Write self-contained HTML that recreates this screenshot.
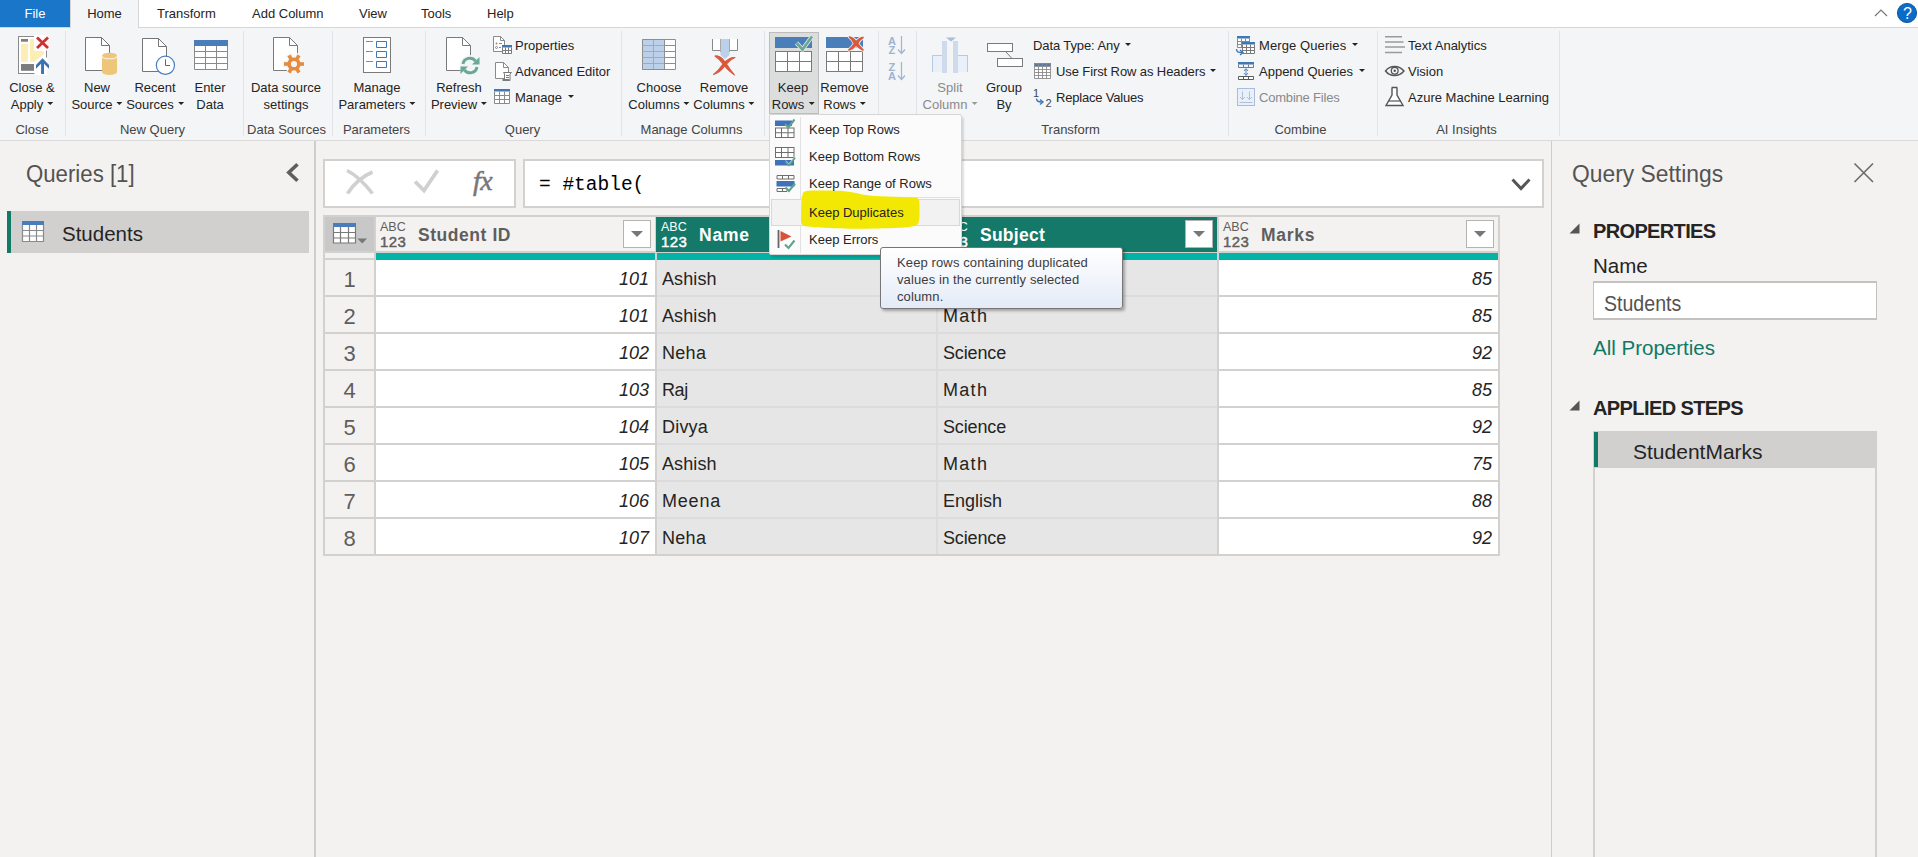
<!DOCTYPE html>
<html><head><meta charset="utf-8"><title>Power Query Editor</title>
<style>
*{box-sizing:border-box;margin:0;padding:0}
html,body{width:1918px;height:857px;overflow:hidden;background:#f3f2f1;font-family:"Liberation Sans",sans-serif;color:#252423}
.abs{position:absolute}
#tabs{position:absolute;left:0;top:0;width:1918px;height:28px;background:#fff;border-bottom:1px solid #d6d6d6}
#tabs .t{position:absolute;top:0;height:27px;line-height:27px;font-size:13px;color:#252423;white-space:nowrap}
#file{left:0;width:70px;background:#1976c8;color:#fff !important;text-align:center}
#home{left:70px;width:69px;background:#f3f5f7;text-align:center;border-left:1px solid #d6d6d6;border-right:1px solid #d6d6d6;height:28px !important}
#ribbon{position:absolute;left:0;top:28px;width:1918px;height:112px;background:#f3f5f7}
.rt{position:absolute;font-size:13px;line-height:17px;white-space:nowrap;color:#252423}
.rc{text-align:center;transform:translateX(-50%)}
.dis{color:#8a8a8a}
.sep{position:absolute;top:31px;width:1px;height:105px;background:#e1e3e6}
.gl{position:absolute;top:121px;font-size:13px;line-height:17px;color:#444;white-space:nowrap;transform:translateX(-50%)}
.car{display:inline-block;width:0;height:0;border-left:3.5px solid transparent;border-right:3.5px solid transparent;border-top:3.5px solid #252423;vertical-align:middle;margin-left:4px;position:relative;top:-2.5px}
.dis .car{border-top-color:#9a9a9a}

.lt{white-space:nowrap}
.ty{font-size:12.5px;line-height:13px;white-space:nowrap}
.ty .n{font-size:15px;font-weight:normal;-webkit-text-stroke:0.45px;line-height:15px;letter-spacing:0.45px}
.hd{font-size:17.5px;font-weight:bold;line-height:22px;letter-spacing:0.55px;white-space:nowrap}
.fb{width:28px;height:28px;background:#fff;border:1px solid #b5b3b1}
.fb i{position:absolute;left:7px;top:10px;width:0;height:0;border-left:6px solid transparent;border-right:6px solid transparent;border-top:6px solid #777}
.rn{width:49px;height:35px;background:#f3f2f1;color:#605e5c;font-size:22px;line-height:39px;text-align:center}
.c{width:279px;height:35px;background:#fff;font-size:18px;line-height:38px;color:#252423;white-space:nowrap}
.c.s{background:#e6e6e6}
.c.num{text-align:right;padding-right:6px;font-style:italic}
.c.txt{padding-left:5px}
</style></head><body>
<!--TABS-->
<div id="tabs">
<div class="t" id="file">File</div>
<div class="t" id="home">Home</div>
<div class="t" style="left:157px">Transform</div>
<div class="t" style="left:252px">Add Column</div>
<div class="t" style="left:359px">View</div>
<div class="t" style="left:421px">Tools</div>
<div class="t" style="left:487px">Help</div>
</div>
<!--RIBBON-->
<div id="ribbon"></div>
<div id="rc">
<!-- separators -->
<div class="sep" style="left:65px"></div><div class="sep" style="left:243px"></div><div class="sep" style="left:332px"></div><div class="sep" style="left:425px"></div><div class="sep" style="left:621px"></div><div class="sep" style="left:764px"></div><div class="sep" style="left:878px"></div><div class="sep" style="left:916px"></div><div class="sep" style="left:1228px"></div><div class="sep" style="left:1377px"></div><div class="sep" style="left:1559px"></div>
<!-- group labels -->
<div class="gl" style="left:32px">Close</div><div class="gl" style="left:152.5px">New Query</div><div class="gl" style="left:286.5px">Data Sources</div><div class="gl" style="left:376.5px">Parameters</div><div class="gl" style="left:522.5px">Query</div><div class="gl" style="left:691.5px">Manage Columns</div><div class="gl" style="left:1070.5px">Transform</div><div class="gl" style="left:1300.5px">Combine</div><div class="gl" style="left:1466.5px">AI Insights</div>
<!-- keep rows pressed button -->
<div class="abs" style="left:769px;top:32px;width:50px;height:82px;background:#dcdddd;border:1px solid #bdbdbd"></div>
<!-- big button labels -->
<div class="rt rc" style="left:32px;top:79px">Close &amp;<br>Apply<i class="car"></i></div>
<div class="rt rc" style="left:97px;top:79px">New<br>Source<i class="car"></i></div>
<div class="rt rc" style="left:155px;top:79px">Recent<br>Sources<i class="car"></i></div>
<div class="rt rc" style="left:210px;top:79px">Enter<br>Data</div>
<div class="rt rc" style="left:286px;top:79px">Data source<br>settings</div>
<div class="rt rc" style="left:377px;top:79px">Manage<br>Parameters<i class="car"></i></div>
<div class="rt rc" style="left:459px;top:79px">Refresh<br>Preview<i class="car"></i></div>
<div class="rt rc" style="left:659px;top:79px">Choose<br>Columns<i class="car"></i></div>
<div class="rt rc" style="left:724px;top:79px">Remove<br>Columns<i class="car"></i></div>
<div class="rt rc" style="left:793px;top:79px">Keep<br>Rows<i class="car"></i></div>
<div class="rt rc" style="left:844.5px;top:79px">Remove<br>Rows<i class="car"></i></div>
<div class="rt rc dis" style="left:950px;top:79px">Split<br>Column<i class="car"></i></div>
<div class="rt rc" style="left:1004px;top:79px">Group<br>By</div>
<!-- small buttons -->
<div class="rt" style="left:515px;top:37px">Properties</div>
<div class="rt" style="left:515px;top:63px">Advanced Editor</div>
<div class="rt" style="left:515px;top:89px">Manage<i class="car" style="margin-left:6px"></i></div>
<div class="rt" style="left:1033px;top:37px;letter-spacing:-0.1px">Data Type: Any<i class="car" style="margin-left:5px"></i></div>
<div class="rt" style="left:1056px;top:63px;letter-spacing:-0.1px">Use First Row as Headers<i class="car" style="margin-left:5px"></i></div>
<div class="rt" style="left:1056px;top:89px;letter-spacing:-0.2px">Replace Values</div>
<div class="rt" style="left:1259px;top:37px;letter-spacing:0.1px">Merge Queries<i class="car" style="margin-left:6px"></i></div>
<div class="rt" style="left:1259px;top:63px">Append Queries<i class="car" style="margin-left:6px"></i></div>
<div class="rt dis" style="left:1259px;top:89px;letter-spacing:-0.2px">Combine Files</div>
<div class="rt" style="left:1408px;top:37px">Text Analytics</div>
<div class="rt" style="left:1408px;top:63px">Vision</div>
<div class="rt" style="left:1408px;top:89px">Azure Machine Learning</div>
<svg class="abs" style="left:0;top:0" width="1918" height="145" viewBox="0 0 1918 145" fill="none" font-family="Liberation Sans, sans-serif">
<!-- Close & Apply -->
<g>
<rect x="18.500" y="36.500" width="28" height="37" fill="#fff" stroke="#8a8a8a"/>
<rect x="21" y="39" width="7" height="2.700" fill="#7d7d7d"/>
<rect x="21" y="44" width="7" height="17.800" fill="#fdeeb5"/>
<path d="M30 39H34V49L36 51H44V54L34.500 61.800H30Z" fill="#fdeeb5"/>
<rect x="21" y="64" width="13" height="6.800" fill="#7d7d7d"/>
<rect x="34" y="35" width="16" height="15.500" fill="#fff"/>
<path d="M34.500 63L42.500 56L47 57.700H50V75H34.500Z" fill="#fff"/>
<rect x="47.200" y="57.500" width="3" height="17" fill="#f3f5f7"/>
<rect x="47.200" y="35" width="3" height="16" fill="#f3f5f7"/>
<path d="M37 37.500L48 48M48 37.500L37 48" stroke="#cf2f2f" stroke-width="2.800"/>
<path d="M42.550 74V62" stroke="#3b73b0" stroke-width="2.900"/>
<path d="M36 65V68.800L42.550 62.200L49 68.800V65L42.550 58.300Z" fill="#3b73b0"/>
</g>
<!-- New Source -->
<g stroke="#757575">
<path d="M85.500 37.500H101.500L109.500 45.500V70.500H85.500Z" fill="#fff"/>
<path d="M101.500 37.500V45.500H109.500"/>
</g>
<path d="M102 55.500V72A7.500 3 0 0 0 117 72V55.500A7.500 2.800 0 0 0 102 55.500Z" fill="#edc67a"/>
<path d="M102 56A7.500 2.800 0 0 0 117 56" stroke="#fcf1d8" stroke-width="1.100"/>
<!-- Recent Sources -->
<g stroke="#757575">
<path d="M142.500 38.500H158.500L166.500 46.500V71.500H142.500Z" fill="#fff"/>
<path d="M158.500 38.500V46.500H166.500"/>
</g>
<circle cx="165.400" cy="65.300" r="9.100" fill="#fff" stroke="#4a7ebb" stroke-width="1.200"/>
<path d="M165.500 59.300V65.500H170" stroke="#666" stroke-width="1"/>
<!-- Enter Data -->
<rect x="194" y="40" width="34" height="30" fill="#fff"/>
<rect x="194" y="40" width="34" height="6" fill="#4a7ebb"/>
<path d="M194.500 46V69.500H227.500V46M205.500 46V69.500M216.500 46V69.500M194.500 51.500H227.500M194.500 57.500H227.500M194.500 63.500H227.500" stroke="#8a8a8a"/>
<!-- Data source settings -->
<g stroke="#7a7a7a">
<path d="M273.500 37.500H289.500L297.500 45.500V70.500H273.500Z" fill="#fff"/>
<path d="M289.500 37.500V45.500H297.500"/>
</g>
<g transform="translate(294 64)">
<g fill="#f3f5f7" stroke="#f3f5f7" stroke-width="2.400">
<rect x="-10" y="-1.800" width="20" height="3.600"/>
<rect x="-10" y="-1.800" width="20" height="3.600" transform="rotate(60)"/>
<rect x="-10" y="-1.800" width="20" height="3.600" transform="rotate(120)"/>
<circle r="6.600"/>
</g>
<g fill="#e78b3e">
<rect x="-10" y="-1.800" width="20" height="3.600"/>
<rect x="-10" y="-1.800" width="20" height="3.600" transform="rotate(60)"/>
<rect x="-10" y="-1.800" width="20" height="3.600" transform="rotate(120)"/>
<circle r="6.600"/>
</g>
<circle r="3.100" fill="#f3f5f7"/>
</g>
<!-- Manage Parameters -->
<rect x="363.500" y="37.500" width="27" height="35" fill="#fff" stroke="#7a7a7a"/>
<path d="M366 41.500H373M366 51.500H373M366 61.500H373" stroke="#8a8a8a"/>
<path d="M376.500 41.500H386.500V47.500H376.500ZM376.500 51.500H386.500V57.500H376.500ZM376.500 61.500H386.500V67.500H376.500Z" stroke="#3f78b5"/>
<!-- Refresh Preview -->
<g stroke="#7a7a7a">
<path d="M446.500 37.500H462.500L470.500 45.500V70.500H446.500Z" fill="#fff"/>
<path d="M462.500 37.500V45.500H470.500"/>
</g>
<g transform="translate(470 65.500)">
<circle r="10.500" fill="#f3f5f7"/>
<path d="M-7 -1.500A7 7 0 0 1 5.500 -4.500" stroke="#6aa894" stroke-width="3"/>
<path d="M9.500 -8.500V-1H2Z" fill="#6aa894"/>
<path d="M7 1.500A7 7 0 0 1 -5.500 4.500" stroke="#6aa894" stroke-width="3"/>
<path d="M-9.500 8.500V1H-2Z" fill="#6aa894"/>
</g>
<!-- Properties small -->
<g stroke="#8a8a8a">
<path d="M493.500 36.500H500.500L504.500 40.500V51.500H493.500Z" fill="#fff"/>
<path d="M500.500 36.500V40.500H504.500"/>
<path d="M499 43.500H502M499 47.500H501" />
<circle cx="496.500" cy="43.500" r="1" fill="#8a8a8a" stroke="none"/>
<circle cx="496.500" cy="47.500" r="1" fill="#fff"/>
</g>
<rect x="502" y="45" width="10" height="9" fill="#fff"/>
<rect x="502" y="45" width="10" height="2.500" fill="#3f78b5"/>
<path d="M502.500 47.500V53.500H511.500V47.500M505.500 47.500V53.500M508.500 47.500V53.500M502.500 50.500H511.500" stroke="#7a7a7a"/>
<!-- Advanced editor -->
<g stroke="#8a8a8a">
<path d="M495.500 62.500H503.500L508.500 67.500V78.500H495.500Z" fill="#fff"/>
<path d="M503.500 62.500V67.500H508.500"/>
</g>
<path d="M503.500 72.500H511.500L510 74V80.500H504.500V74Z" fill="#fff" stroke="#7a7a7a"/>
<path d="M506 75.500H509M506 77.500H509" stroke="#7a7a7a"/>
<rect x="502.500" y="79" width="7" height="2" fill="#7a7a7a"/>
<!-- Manage small -->
<rect x="494" y="89" width="16" height="15" fill="#fff"/>
<rect x="494" y="89" width="16" height="2.500" fill="#3f78b5"/>
<path d="M494.500 91.500V103.500H509.500V91.500M499.500 91.500V103.500M504.500 91.500V103.500M494.500 95.500H509.500M494.500 99.500H509.500" stroke="#8a8a8a"/>
<!-- Choose Columns -->
<rect x="642" y="39" width="34" height="31" fill="#fff"/>
<rect x="642" y="39" width="22.5" height="31" fill="#bdd0e9"/>
<path d="M642.500 39.500H675.500V69.500H642.500ZM653.500 39.500V69.500M664.500 39.500V69.500M642.500 45.500H675.500M642.500 51.500H675.500M642.500 57.500H675.500M642.500 63.500H675.500" stroke="#8e8e8e"/>
<path d="M653.500 40V69M642.500 45.500H664M642.500 51.500H664M642.500 57.500H664M642.500 63.500H664" stroke="#a9a9a9"/>
<!-- Remove Columns -->
<rect x="712" y="39" width="26" height="11" fill="#fff"/>
<path d="M712.500 39V50.500H720.500M729.500 50.500H737.500V39" stroke="#8a8a8a"/>
<path d="M720.500 39V55L725 59L729.500 55V39Z" fill="#bdd0e9"/>
<path d="M720.500 39V52M729.500 39V52" stroke="#a9a9a9"/>
<path d="M715 56C719 55 722 58 725 62C728 59 731 57 735 57.500C731 59 728 62 726.500 64C729 68 732 72 734.500 75C730 72 727 69 724.500 66C722 70 718 73 713.500 74.500C717 72 721 67 723 64C721 61 718 58 715 56Z" fill="#d9593d" stroke="#d9593d" stroke-width="1.100" stroke-linejoin="round"/>
<!-- Keep Rows -->
<rect x="775" y="37" width="37" height="11" fill="#4a7ebb"/>
<rect x="775.500" y="51.500" width="36" height="20" fill="#fff" stroke="#7a7a7a"/>
<path d="M787.500 51.500V71.500M799.500 51.500V71.500M775.500 61.500H811.500" stroke="#7a7a7a"/>
<path d="M796.500 43L802.500 49.500L812 36.500" stroke="#e9f1ee" stroke-width="4.200"/><path d="M796.500 43L802.500 49.500L812 36.500" stroke="#6aa894" stroke-width="2.800"/>
<!-- Remove Rows -->
<rect x="826" y="37" width="37" height="11" fill="#4a7ebb"/>
<rect x="826.500" y="51.500" width="36" height="20" fill="#fff" stroke="#7a7a7a"/>
<path d="M838.500 51.500V71.500M850.500 51.500V71.500M826.500 61.500H862.500" stroke="#7a7a7a"/>
<path d="M849.500 37C852 37.500 854.500 39.500 856 42C858 39.500 860 38 863 37.500C860.500 39 858.500 41.500 857.500 43.500C859 46 861 48 863 50C860 48.500 858 46.500 856 45C854.500 47 852 49 849 50C851.500 48 853.500 45.500 854.500 43.500C853.500 41 851.500 38.500 849.500 37Z" fill="#eef1f5" stroke="#eef1f5" stroke-width="3.400" stroke-linejoin="round"/><path d="M849.500 37C852 37.500 854.500 39.500 856 42C858 39.500 860 38 863 37.500C860.500 39 858.500 41.500 857.500 43.500C859 46 861 48 863 50C860 48.500 858 46.500 856 45C854.500 47 852 49 849 50C851.500 48 853.500 45.500 854.500 43.500C853.500 41 851.500 38.500 849.500 37Z" fill="#d9593d" stroke="#d9593d" stroke-width="1.700" stroke-linejoin="round"/>
<!-- Sort -->
<g fill="#a0b3d0" font-size="11" font-weight="bold">
<text x="888" y="45">A</text><text x="888.500" y="54">Z</text>
<text x="888.500" y="71">Z</text><text x="888" y="80">A</text>
</g>
<path d="M901.500 36V53M898 49.500L901.500 53.500L905 49.500M901.500 62V79M898 75.500L901.500 79.500L905 75.500" stroke="#a0b3d0" stroke-width="1.200"/>
<!-- Split column -->
<path d="M946 37.500H956L951 41.500Z" fill="#a9bcd9"/>
<rect x="932.500" y="55.500" width="10" height="18" fill="#eaf0fa" stroke="#b8c9e6"/>
<rect x="957.500" y="55.500" width="10" height="18" fill="#eaf0fa" stroke="#b8c9e6"/>
<rect x="932" y="72" width="37" height="2" fill="#f3f5f7"/>
<rect x="942" y="41" width="5" height="32" fill="#cfdaec"/>
<rect x="953" y="41" width="5" height="32" fill="#cfdaec"/>
<!-- Group By -->
<rect x="987.500" y="43.500" width="25" height="8" fill="#fff" stroke="#7a7a7a"/>
<rect x="997.500" y="58.500" width="25" height="8" fill="#fff" stroke="#7a7a7a"/>
<path d="M1005.500 51.500L1012 58.500" stroke="#7a7a7a"/>
<!-- Use first row as headers -->
<rect x="1034" y="63" width="17" height="16" fill="#fff"/>
<rect x="1034" y="63" width="17" height="3" fill="#4a7ebb"/>
<path d="M1034.500 63.500V78.500H1050.500V63.500ZM1038.500 63.500V78.500M1042.500 63.500V78.500M1046.500 63.500V78.500M1034.500 66.500H1050.500M1034.500 69.500H1050.500M1034.500 72.500H1050.500M1034.500 75.500H1050.500" stroke="#8a8a8a" stroke-width="0.900"/>
<!-- Replace values -->
<g fill="#444" font-size="11"><text x="1033" y="96.500">1</text><text x="1045.500" y="106.500">2</text></g>
<path d="M1036.500 98.500C1036.500 101 1038 102 1041.500 102M1040 99.500L1043 102L1040 104.500" stroke="#3f78b5" stroke-width="1.400"/>
<!-- Merge queries -->
<rect x="1237" y="36" width="13" height="12" fill="#fff"/>
<rect x="1237" y="36" width="13" height="2.500" fill="#3f78b5"/>
<path d="M1237.500 38.500V47.500H1249.500V38.500M1241.500 38.500V47.500M1245.500 38.500V47.500M1237.500 41.500H1249.500M1237.500 44.500H1249.500" stroke="#8a8a8a"/>
<rect x="1242" y="42" width="13" height="12" fill="#fff"/>
<rect x="1242" y="42" width="13" height="2.500" fill="#3f78b5"/>
<path d="M1242.500 44.500V53.500H1254.500V44.500M1246.500 44.500V53.500M1250.500 44.500V53.500M1242.500 47.500H1254.500M1242.500 50.500H1254.500" stroke="#7a7a7a"/>
<path d="M1236.500 49C1236.500 52 1238 52.500 1242 52.500M1240 50L1243 52.500L1240 55" stroke="#3f78b5" stroke-width="1.400"/>
<!-- Append queries -->
<rect x="1238" y="62" width="16" height="2.500" fill="#3f78b5"/>
<path d="M1238.500 64.500V67.500H1253.500V64.500M1243.500 64.500V67.500M1248.500 64.500V67.500" stroke="#7a7a7a"/>
<path d="M1238.500 76.500H1253.500V79.500H1238.500ZM1243.500 76.500V79.500M1248.500 76.500V79.500" stroke="#5a5a5a" fill="#fff"/>
<path d="M1246 69V75M1244 71L1246 68.500L1248 71M1244 73L1246 75.500L1248 73" stroke="#4a7ebb" stroke-width="0.900"/>
<!-- Combine Files -->
<rect x="1237.500" y="88.500" width="17" height="17" fill="#eaf0fa" stroke="#a9bcd9"/>
<path d="M1242.500 91.500V99.500M1240 97L1242.500 99.500L1245 97M1249.500 91.500V99.500M1247 97L1249.500 99.500L1252 97M1239.500 102.500H1252.500" stroke="#a9b9d3" stroke-width="0.900"/>
<!-- Text analytics -->
<path d="M1385 36.750H1402M1385 42H1403.500M1385 47H1405M1385 52.500H1402" stroke="#9a9a9a" stroke-width="1.500"/>
<!-- Vision -->
<path d="M1385.500 71C1390 65 1399 65 1404 71C1399 77 1390 77 1385.500 71Z" stroke="#555" stroke-width="1.400"/>
<circle cx="1394.700" cy="70.800" r="3.400" stroke="#555" stroke-width="1.300"/>
<circle cx="1394.700" cy="70.800" r="1.200" fill="#555"/>
<!-- Azure ML -->
<path d="M1391.500 87.500H1397.500M1392 88V95L1386 105.500H1403L1397 95V88" stroke="#555" stroke-width="1.400" fill="#fff"/>
<path d="M1388.500 101H1400.500" stroke="#555" stroke-width="1.200"/>
<!-- top right -->
<path d="M1875 16L1881 10L1887 16" stroke="#777" stroke-width="1.200"/>
<circle cx="1907" cy="13" r="9.600" fill="#0a6bc9" stroke="#0b4c94" stroke-width="0.900"/>
<text x="1907.500" y="18.700" font-size="16" fill="#fff" text-anchor="middle">?</text>
</svg>

</div>

<div class="abs" style="left:0;top:140px;width:1918px;height:1px;background:#dadada"></div>
<div class="abs" style="left:314px;top:141px;width:2px;height:716px;background:#d0cecc"></div>
<div class="abs" style="left:1551px;top:141px;width:1px;height:716px;background:#cfcdcb"></div>
<div class="abs lt" style="left:26px;top:160px;font-size:23.500px;line-height:28px;color:#555351;transform:scaleX(0.945);transform-origin:0 0">Queries [1]</div>
<svg class="abs" style="left:282px;top:159px" width="20" height="26" viewBox="0 0 20 26"><path d="M15.500 5.200L6.800 13.500L15.500 21.800" fill="none" stroke="#605e5c" stroke-width="3.600"/></svg>
<div class="abs" style="left:7px;top:211px;width:302px;height:42px;background:#d2d0ce"></div>
<div class="abs" style="left:7px;top:211px;width:4px;height:42px;background:#0f7b66"></div>
<svg class="abs" style="left:21px;top:220px" width="24" height="23" viewBox="0 0 24 23"><rect x="1" y="1" width="22" height="21" fill="#fff"/><rect x="1" y="1" width="22" height="4" fill="#4a7ebb"/><path d="M1.500 5V21.500H22.500V5M8.500 5V21.500M15.500 5V21.500M1.500 10.500H22.500M1.500 16H22.500" fill="none" stroke="#8a8a8a" stroke-width="1.200"/></svg>
<div class="abs lt" style="left:62px;top:220px;font-size:20.500px;line-height:28px;color:#252423">Students</div>

<div class="abs" style="left:323px;top:159px;width:193px;height:49px;background:#fff;border:2px solid #d3d1cf"></div>
<div class="abs" style="left:523px;top:159px;width:1021px;height:49px;background:#fff;border:2px solid #d3d1cf"></div>
<svg class="abs" style="left:323px;top:159px" width="193" height="49" viewBox="323 159 193 49" fill="none">
<path d="M347 170.500C356 175 365 184 372.500 193.500M372.500 172C362 176.500 353 185 347.500 193.500" stroke="#d0d0d0" stroke-width="3.600"/>
<path d="M415 181.500L424 190.500L437.500 170.500" stroke="#d0d0d0" stroke-width="3.800"/>
</svg>
<div class="abs" style="left:473px;top:166px;font-family:'Liberation Serif',serif;font-style:italic;font-size:28px;line-height:30px;color:#777;letter-spacing:-0.5px;-webkit-text-stroke:0.5px #777">fx</div>
<div class="abs" style="left:539px;top:174px;font-family:'Liberation Mono',monospace;font-size:19.500px;line-height:22px;color:#000;white-space:pre">= #table(</div>
<svg class="abs" style="left:1508px;top:174px" width="26" height="20" viewBox="0 0 26 20"><path d="M4.500 5.500L13 14.500L21.500 5.500" fill="none" stroke="#555" stroke-width="3"/></svg>

<div class="abs" style="left:323px;top:215px;width:1177px;height:341px;background:#d3d1cf"></div>
<div class="abs" style="left:325px;top:217px;width:49px;height:34px;background:#c8c8c8"></div>
<svg class="abs" style="left:332px;top:222px" width="36" height="23" viewBox="332 222 36 23"><rect x="333" y="223" width="23" height="20" fill="#fff"/><rect x="333" y="223" width="23" height="4" fill="#4a7ebb"/><path d="M333.500 227V243H355.500V227M340.500 227V243M348.500 227V243M333.500 232.500H355.500M333.500 238H355.500" fill="none" stroke="#7a7a7a" stroke-width="1.200"/><path d="M357.500 238.500H367L362.200 243.500Z" fill="#777"/></svg>
<div class="abs" style="left:325px;top:253px;width:49px;height:5px;background:#f3f2f1"></div>
<div class="abs" style="left:376px;top:217px;width:279px;height:34px;background:#f3f2f1"></div>
<div class="abs" style="left:376px;top:253px;width:279px;height:7px;background:#02b3a6"></div>
<div class="abs ty" style="left:380px;top:221px;color:#605e5c"><span class="a">ABC</span><br><span class="n">123</span></div>
<div class="abs hd" style="left:418px;top:224px;color:#605e5c;letter-spacing:0.55px">Student ID</div>
<div class="abs fb" style="left:623px;top:220px"><i></i></div>
<div class="abs" style="left:656px;top:217px;width:280px;height:35px;background:#15796a"></div>
<div class="abs" style="left:657px;top:253px;width:279px;height:7px;background:#02b3a6"></div>
<div class="abs ty" style="left:661px;top:221px;color:#fff"><span class="a">ABC</span><br><span class="n">123</span></div>
<div class="abs hd" style="left:699px;top:224px;color:#fff;letter-spacing:0.8px">Name</div>
<div class="abs fb" style="left:904px;top:220px"><i></i></div>
<div class="abs" style="left:937px;top:217px;width:280px;height:35px;background:#15796a"></div>
<div class="abs" style="left:938px;top:253px;width:279px;height:7px;background:#02b3a6"></div>
<div class="abs ty" style="left:942px;top:221px;color:#fff"><span class="a">ABC</span><br><span class="n">123</span></div>
<div class="abs hd" style="left:980px;top:224px;color:#fff;letter-spacing:0.25px">Subject</div>
<div class="abs fb" style="left:1185px;top:220px"><i></i></div>
<div class="abs" style="left:1219px;top:217px;width:279px;height:34px;background:#f3f2f1"></div>
<div class="abs" style="left:1219px;top:253px;width:279px;height:7px;background:#02b3a6"></div>
<div class="abs ty" style="left:1223px;top:221px;color:#605e5c"><span class="a">ABC</span><br><span class="n">123</span></div>
<div class="abs hd" style="left:1261px;top:224px;color:#605e5c;letter-spacing:0.7px">Marks</div>
<div class="abs fb" style="left:1466px;top:220px"><i></i></div>
<div class="abs" style="left:657px;top:260px;width:560px;height:294px;background:#dcdcdc"></div>
<div class="abs rn" style="left:325px;top:260px">1</div>
<div class="abs c num" style="left:376px;top:260px">101</div>
<div class="abs c s txt" style="left:657px;top:260px;letter-spacing:0.1px">Ashish</div>
<div class="abs c s txt" style="left:938px;top:260px;letter-spacing:1.3px">Math</div>
<div class="abs c num" style="left:1219px;top:260px">85</div>
<div class="abs rn" style="left:325px;top:297px">2</div>
<div class="abs c num" style="left:376px;top:297px">101</div>
<div class="abs c s txt" style="left:657px;top:297px;letter-spacing:0.1px">Ashish</div>
<div class="abs c s txt" style="left:938px;top:297px;letter-spacing:1.3px">Math</div>
<div class="abs c num" style="left:1219px;top:297px">85</div>
<div class="abs rn" style="left:325px;top:334px">3</div>
<div class="abs c num" style="left:376px;top:334px">102</div>
<div class="abs c s txt" style="left:657px;top:334px;letter-spacing:0.3px">Neha</div>
<div class="abs c s txt" style="left:938px;top:334px;letter-spacing:-0.15px">Science</div>
<div class="abs c num" style="left:1219px;top:334px">92</div>
<div class="abs rn" style="left:325px;top:371px">4</div>
<div class="abs c num" style="left:376px;top:371px">103</div>
<div class="abs c s txt" style="left:657px;top:371px;letter-spacing:-0.4px">Raj</div>
<div class="abs c s txt" style="left:938px;top:371px;letter-spacing:1.3px">Math</div>
<div class="abs c num" style="left:1219px;top:371px">85</div>
<div class="abs rn" style="left:325px;top:408px">5</div>
<div class="abs c num" style="left:376px;top:408px">104</div>
<div class="abs c s txt" style="left:657px;top:408px;letter-spacing:0.2px">Divya</div>
<div class="abs c s txt" style="left:938px;top:408px;letter-spacing:-0.15px">Science</div>
<div class="abs c num" style="left:1219px;top:408px">92</div>
<div class="abs rn" style="left:325px;top:445px">6</div>
<div class="abs c num" style="left:376px;top:445px">105</div>
<div class="abs c s txt" style="left:657px;top:445px;letter-spacing:0.1px">Ashish</div>
<div class="abs c s txt" style="left:938px;top:445px;letter-spacing:1.3px">Math</div>
<div class="abs c num" style="left:1219px;top:445px">75</div>
<div class="abs rn" style="left:325px;top:482px">7</div>
<div class="abs c num" style="left:376px;top:482px">106</div>
<div class="abs c s txt" style="left:657px;top:482px;letter-spacing:0.8px">Meena</div>
<div class="abs c s txt" style="left:938px;top:482px">English</div>
<div class="abs c num" style="left:1219px;top:482px">88</div>
<div class="abs rn" style="left:325px;top:519px">8</div>
<div class="abs c num" style="left:376px;top:519px">107</div>
<div class="abs c s txt" style="left:657px;top:519px;letter-spacing:0.3px">Neha</div>
<div class="abs c s txt" style="left:938px;top:519px;letter-spacing:-0.15px">Science</div>
<div class="abs c num" style="left:1219px;top:519px">92</div>
<div class="abs lt" style="left:1571.500px;top:160px;font-size:23.500px;line-height:28px;color:#555351;transform:scaleX(0.972);transform-origin:0 0">Query Settings</div>
<svg class="abs" style="left:1852px;top:161px" width="24" height="24" viewBox="0 0 24 24"><path d="M2.500 2.500L21 21M21 2.500L2.500 21" stroke="#6a6a6a" stroke-width="1.600"/></svg>
<svg class="abs" style="left:1568px;top:222px" width="13" height="13" viewBox="0 0 13 13"><path d="M11.500 1.500V11.500H1.500Z" fill="#555"/></svg>
<div class="abs lt" style="left:1593px;top:217px;font-size:20px;letter-spacing:-0.65px;line-height:28px;font-weight:bold;color:#252423">PROPERTIES</div>
<div class="abs lt" style="left:1593px;top:252px;font-size:20.500px;line-height:28px;color:#252423">Name</div>
<div class="abs" style="left:1593px;top:281px;width:284px;height:39px;background:#fff;border:solid #c4c2c0;border-width:2px 1px"></div>
<div class="abs lt" style="left:1603.500px;top:290px;font-size:21.500px;line-height:28px;color:#555351;transform:scaleX(0.91);transform-origin:0 0">Students</div>
<div class="abs lt" style="left:1593px;top:334px;font-size:20.500px;line-height:28px;color:#117865">All Properties</div>
<svg class="abs" style="left:1568px;top:399px" width="13" height="13" viewBox="0 0 13 13"><path d="M11.500 1.500V11.500H1.500Z" fill="#555"/></svg>
<div class="abs lt" style="left:1593px;top:394px;font-size:20px;letter-spacing:-0.6px;line-height:28px;font-weight:bold;color:#252423">APPLIED STEPS</div>
<div class="abs" style="left:1593px;top:431px;width:284px;height:430px;border:2px solid #d3d1cf;border-top:none"></div>
<div class="abs" style="left:1593px;top:431px;width:284px;height:37px;background:#d2d0ce"></div>
<div class="abs" style="left:1594px;top:432px;width:4px;height:35px;background:#0f7b66"></div>
<div class="abs lt" style="left:1633px;top:438px;font-size:21px;line-height:28px;color:#252423">StudentMarks</div>

<div class="abs" style="left:769px;top:114px;width:193px;height:141px;background:#fbfbfb;border:1px solid #d6d6d6;border-radius:2px;box-shadow:2px 3px 2px rgba(0,0,0,0.13)"></div>
<div class="abs" style="left:800px;top:117px;width:1px;height:136px;background:#e2e2e2"></div>
<div class="abs" style="left:801px;top:197px;width:159px;height:1px;background:#e0e0e0"></div>
<div class="abs" style="left:771px;top:199px;width:189px;height:27px;background:#f2f2f2;border:1px solid #d8d8d8"></div>
<svg class="abs" style="left:769px;top:115px" width="193" height="140" viewBox="769 115 193 140" fill="none">
<path d="M803 193C804 190 812 190.500 825 190.500C840 190.500 850 191 862 194.500C875 197 900 196.500 915 197.500C919.500 198 919.500 201 919.500 206C919.500 215 920 221 917.500 224.500C912 228 895 228 875 228.500C850 229.500 825 228 808 226.500C802 226 801 224 801 220C801.500 212 800.500 200 803 193Z" fill="#f3e803"/>
<!-- keep top rows -->
<rect x="775" y="120.500" width="17" height="5.500" fill="#3f72b8"/>
<rect x="775.500" y="128" width="18.500" height="9.500" fill="#fff" stroke="#6e6e6e"/>
<path d="M781.500 128V137.500M788 128V137.500M775.500 132.750H794" stroke="#6e6e6e"/>
<path d="M785 124L788.500 127.500L794.500 119.500" stroke="#5fa28d" stroke-width="2.100"/>
<!-- keep bottom rows -->
<rect x="775.500" y="147.500" width="18.500" height="10" fill="#fff" stroke="#6e6e6e"/>
<path d="M781.500 147.500V157.500M788 147.500V157.500M775.500 152.500H794" stroke="#6e6e6e"/>
<rect x="775" y="160" width="19" height="5.500" fill="#3f72b8"/>
<path d="M785.500 161.500L789 165L795 157.500" stroke="#5fa28d" stroke-width="2.100"/>
<path d="M785.500 161.500L789 165L795 157.500" stroke="#fbfbfb" stroke-width="0.500" transform="translate(0 -1.300)"/>
<!-- keep range -->
<path d="M777 175.500H794V179H777ZM782.500 175.500V179M788.500 175.500V179" stroke="#6e6e6e"/>
<rect x="776.500" y="181" width="18" height="5.500" fill="#3f72b8"/>
<path d="M777 188.500H787V191.500H777ZM782.500 188.500V191.500" stroke="#6e6e6e"/>
<path d="M785.500 187.500L789 191L795 183.500" stroke="#5fa28d" stroke-width="2.100"/>
<!-- keep errors -->
<path d="M778.500 230V248" stroke="#666" stroke-width="1.800"/>
<path d="M780.500 231L791.500 236.500L780.500 241.500Z" fill="#d9533a"/>
<path d="M785 244.500L788.500 248L794.500 240.500" stroke="#5fa28d" stroke-width="2.100"/>
</svg>
<div class="rt" style="left:809px;top:121px">Keep Top Rows</div>
<div class="rt" style="left:809px;top:148px">Keep Bottom Rows</div>
<div class="rt" style="left:809px;top:175px">Keep Range of Rows</div>
<div class="rt" style="left:809px;top:204px">Keep Duplicates</div>
<div class="rt" style="left:809px;top:231px">Keep Errors</div>
<div class="abs" style="left:880px;top:247px;width:243px;height:62px;border:1px solid #767676;border-radius:3px;background:linear-gradient(#ffffff,#e4ebf7);box-shadow:2px 2px 3px rgba(0,0,0,0.3)"></div>
<div class="rt" style="left:897px;top:254px;color:#3c3c3c;letter-spacing:0.12px">Keep rows containing duplicated<br>values in the currently selected<br>column.</div>

</body></html>
